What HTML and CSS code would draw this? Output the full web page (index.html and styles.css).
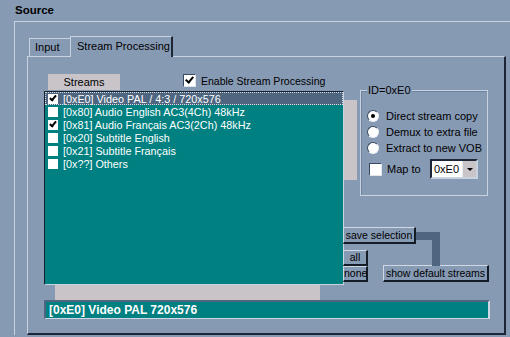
FILE: index.html
```html
<!DOCTYPE html>
<html lang="en">
<head>
    <meta charset="UTF-8">
    <title>Source - Stream Processing</title>
    <link rel="stylesheet" href="styles.css">
</head>
<body>
    <div class="title">Source</div>

    <div class="group">
        <!-- Tabs -->
        <div class="tabs">
            <div class="tab">Input</div>
            <div class="tab active">Stream Processing</div>
        </div>

        <div class="panel">
            <div class="head-row">
                <div class="col-head">Streams</div>
                <div class="check-label">
                    <span class="box sunken checked"></span>
                    <span>Enable Stream Processing</span>
                </div>
            </div>

            <div class="main">
                <!-- Stream list -->
                <div class="list-col">
                    <div class="list">
                        <div class="row selected"><span class="lbox checked"></span>[0xE0] Video PAL / 4:3 / 720x576</div>
                        <div class="row"><span class="lbox"></span>[0x80] Audio English AC3(4Ch) 48kHz</div>
                        <div class="row"><span class="lbox checked"></span>[0x81] Audio Français AC3(2Ch) 48kHz</div>
                        <div class="row"><span class="lbox"></span>[0x20] Subtitle English</div>
                        <div class="row"><span class="lbox"></span>[0x21] Subtitle Français</div>
                        <div class="row"><span class="lbox"></span>[0x??] Others</div>
                    </div>
                    <div class="hscroll"></div>
                </div>

                <!-- Options for the selected stream -->
                <div class="side">
                    <div class="gray-strip"></div>
                    <div class="connector"></div>

                    <div class="idbox">
                        <span class="legend">ID=0xE0</span>
                        <div class="opt"><span class="radio on"></span>Direct stream copy</div>
                        <div class="opt"><span class="radio"></span>Demux to extra file</div>
                        <div class="opt"><span class="radio"></span>Extract to new VOB</div>
                        <div class="map-row">
                            <span class="box sunken"></span>
                            <span class="map-text">Map to</span>
                            <div class="combo">
                                <span class="combo-val">0xE0</span>
                                <span class="combo-btn"></span>
                            </div>
                        </div>
                    </div>

                    <button class="btn save">save selection</button>

                    <div class="btn-row">
                        <div class="stack">
                            <button class="btn small">all</button>
                            <button class="btn small">none</button>
                        </div>
                        <button class="btn defaults">show default streams</button>
                    </div>
                </div>
            </div>

            <div class="status">[0xE0] Video PAL 720x576</div>
        </div>
    </div>
</body>
</html>
```

FILE: styles.css
```css
body {
    margin: 0;
    background: #879ab4;
    font-family: "Liberation Sans", Arial, sans-serif;
    font-size: 10.5px;
    color: #000;
    overflow: hidden;
    white-space: nowrap;
}

.title {
    height: 21px;
    padding-left: 15px;
    padding-top: 3px;
    box-sizing: border-box;
    font-weight: bold;
    font-size: 11.5px;
    line-height: 15px;
}

.group {
    margin-left: 14px;
    border-top: 1px solid #c9d2df;
    border-left: 1px solid #c9d2df;
    padding: 14px 0 0 12px;
}

/* Tabs */
.tabs {
    display: flex;
    height: 20px;
    padding-left: 2px;
}

.tab {
    box-sizing: border-box;
    margin-top: 2px;
    height: 18px;
    width: 41px;
    padding-left: 5px;
    border-top: 1px solid #c9d2df;
    border-left: 1px solid #c9d2df;
    line-height: 17px;
    font-size: 11px;
}

.tab.active {
    margin-top: 0;
    height: 21px;
    width: 103px;
    padding-left: 6px;
    border-right: 2px solid #1c2636;
    background: #879ab4;
    position: relative;
    z-index: 1;
    line-height: 19px;
}

.panel {
    box-sizing: border-box;
    width: 479px;
    height: 279px;
    border-top: 1px solid #c9d2df;
    border-left: 1px solid #c9d2df;
    border-right: 2px solid #1c2636;
    border-bottom: 2px solid #1c2636;
    padding: 17px 0 0 16px;
}

.head-row {
    display: flex;
    height: 17px;
}

.col-head {
    margin-left: 4px;
    width: 72px;
    height: 16px;
    background: #c8c4c8;
    text-align: center;
    line-height: 16px;
    font-size: 11px;
}

.check-label {
    display: flex;
    align-items: center;
    gap: 5px;
    margin-left: 63px;
    height: 13px;
    font-size: 10.5px;
}

/* Shared check box */
.box {
    display: inline-block;
    box-sizing: border-box;
    width: 13px;
    height: 13px;
    background: #fff;
    flex: none;
    position: relative;
}

.sunken {
    border-top: 1px solid #3a4a60;
    border-left: 1px solid #3a4a60;
    border-right: 1px solid #e0e6ee;
    border-bottom: 1px solid #e0e6ee;
}

.box.checked::after,
.lbox.checked::after {
    content: "";
    position: absolute;
    left: 3px;
    top: 0px;
    width: 3px;
    height: 6px;
    border-right: 2px solid #000;
    border-bottom: 2px solid #000;
    transform: rotate(40deg);
}

.main {
    display: grid;
    grid-template-columns: 299px 1fr;
}

/* Stream list */
.list {
    box-sizing: border-box;
    width: 300px;
    height: 194px;
    background: #008080;
    border-top: 1px solid #14202e;
    border-left: 1px solid #14202e;
    border-right: 1px solid #c9d2df;
    border-bottom: 1px solid #c9d2df;
    color: #fff;
}

.row {
    display: flex;
    align-items: center;
    height: 13px;
    padding-left: 3px;
    font-size: 10.8px;
}

.row.selected {
    background: #4e6680;
    outline: 1px dotted #d8dee6;
    outline-offset: -1px;
}

.lbox {
    display: inline-block;
    width: 10px;
    height: 10px;
    margin-right: 5px;
    background: #fff;
    position: relative;
    flex: none;
}

.lbox.checked::after {
    left: 3px;
    top: 0;
    width: 2px;
    height: 5px;
}

.hscroll {
    margin-left: 11px;
    width: 265px;
    height: 15px;
    background: #c8c4c8;
}

/* Right side */
.side {
    position: relative;
}

.gray-strip {
    position: absolute;
    left: 1px;
    top: 9px;
    width: 13px;
    height: 80px;
    background: #c8c4c8;
}

.connector {
    position: absolute;
    left: 72px;
    top: 141px;
    width: 17px;
    height: 26px;
    border-top: 8px solid #4e6680;
    border-right: 8px solid #4e6680;
}

.idbox {
    position: relative;
    box-sizing: border-box;
    margin: -1px 0 0 17px;
    width: 128px;
    height: 106px;
    border: 1px solid #c9d2df;
    box-shadow: inset 1px 1px 0 #6f82a0;
    padding: 19px 0 0 6px;
}

.legend {
    position: absolute;
    left: 6px;
    top: -7px;
    padding: 0 1px;
    background: #879ab4;
    line-height: 12px;
    font-size: 11px;
}

.opt {
    display: flex;
    align-items: center;
    gap: 7px;
    height: 12px;
    margin-bottom: 4px;
    font-size: 11px;
}

.radio {
    box-sizing: border-box;
    width: 12px;
    height: 12px;
    border-radius: 50%;
    background: #fff;
    border-top: 1px solid #3a4a60;
    border-left: 1px solid #3a4a60;
    border-right: 1px solid #eef1f5;
    border-bottom: 1px solid #eef1f5;
    position: relative;
    flex: none;
}

.radio.on::after {
    content: "";
    position: absolute;
    left: 3px;
    top: 3px;
    width: 4px;
    height: 4px;
    border-radius: 50%;
    background: #000;
}

.map-row {
    display: flex;
    align-items: center;
    height: 20px;
    margin-top: 5px;
    padding-left: 2px;
}

.map-text {
    width: 48px;
    padding-left: 5px;
    box-sizing: border-box;
    font-size: 11px;
}

.combo {
    box-sizing: border-box;
    display: flex;
    width: 48px;
    height: 20px;
    background: #fff;
    border: 2px solid #1c2636;
    border-right-color: #c9d2df;
    border-bottom-color: #c9d2df;
}

.combo-val {
    flex: 1;
    padding-left: 2px;
    line-height: 16px;
    font-size: 11px;
}

.combo-btn {
    width: 13px;
    background: #c8c4c8;
    border-left: 1px solid #e8e8e8;
    position: relative;
}

.combo-btn::after {
    content: "";
    position: absolute;
    left: 4px;
    top: 7px;
    border-left: 3px solid transparent;
    border-right: 3px solid transparent;
    border-top: 3px solid #000;
}

/* Buttons */
.btn {
    box-sizing: border-box;
    display: block;
    margin: 0;
    padding: 0;
    background: #879ab4;
    border-top: 1px solid #d0d8e4;
    border-left: 1px solid #d0d8e4;
    border-right: 2px solid #141c28;
    border-bottom: 2px solid #141c28;
    font-family: "Liberation Sans", Arial, sans-serif;
    font-size: 10.5px;
    color: #000;
    text-align: center;
    white-space: nowrap;
}

.save {
    position: relative;
    margin-top: 31px;
    width: 73px;
    height: 17px;
}

.btn-row {
    display: flex;
    align-items: flex-end;
    margin-top: 6px;
}

.small {
    width: 25px;
    height: 16px;
    line-height: 13px;
}

.defaults {
    margin-left: 15px;
    width: 106px;
    height: 17px;
}

/* Status bar */
.status {
    box-sizing: border-box;
    width: 446px;
    height: 19px;
    background: #008080;
    border-top: 2px solid #4e6680;
    border-left: 2px solid #4e6680;
    border-right: 2px solid #d0d8e4;
    border-bottom: 1px solid #d0d8e4;
    padding-left: 3px;
    color: #fff;
    font-weight: bold;
    font-size: 12px;
    line-height: 16px;
}
```
